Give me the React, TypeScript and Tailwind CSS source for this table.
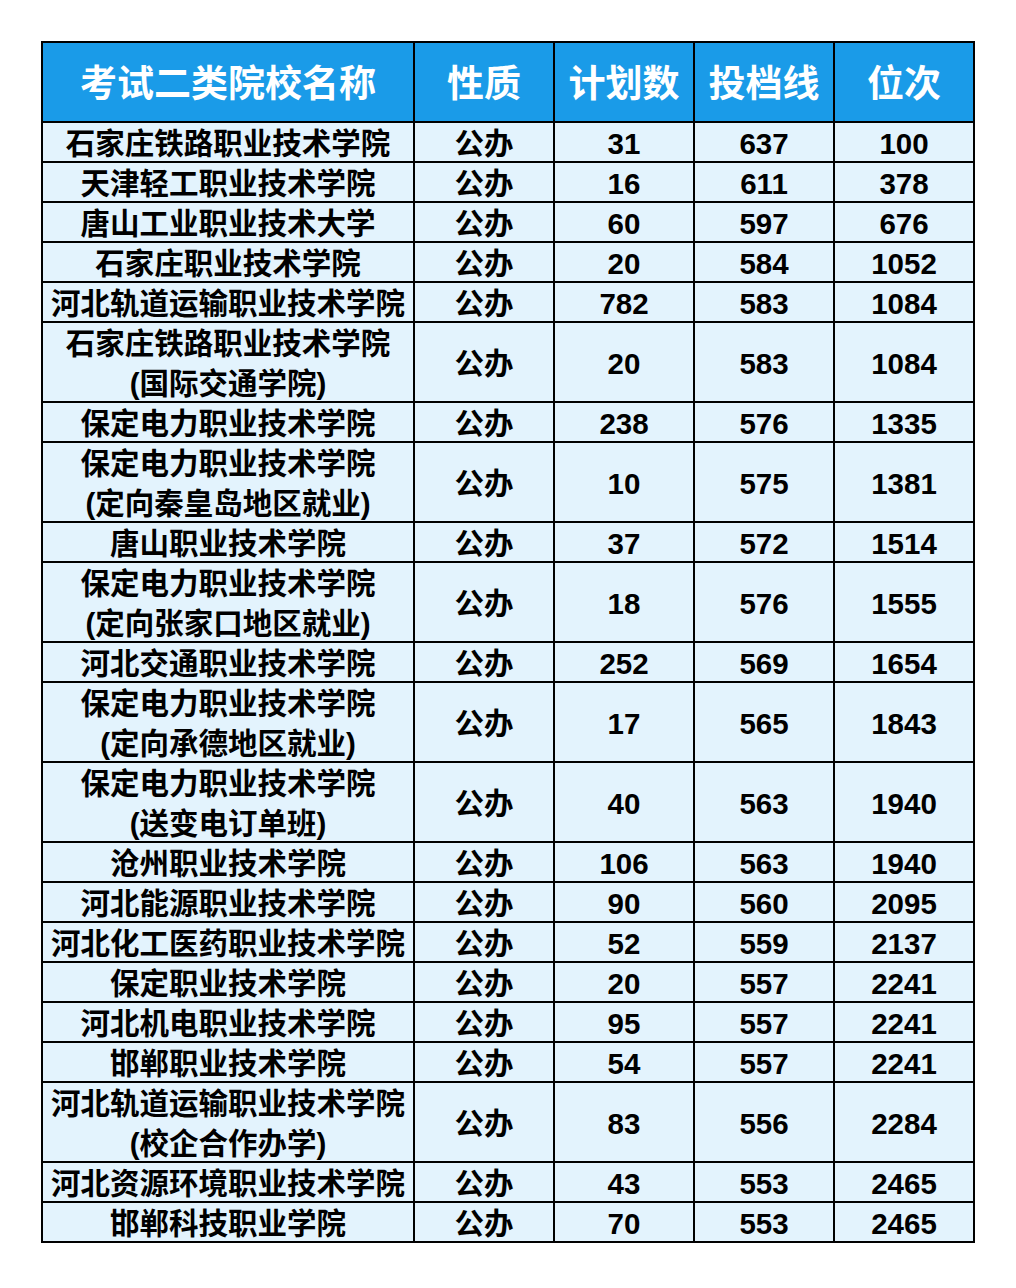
import React from "react";

type Row = { name: string[]; type: string; plan: string; line: string; rank: string };

const rows: Row[] = [
  { name: ["石家庄铁路职业技术学院"], type: "公办", plan: "31", line: "637", rank: "100" },
  { name: ["天津轻工职业技术学院"], type: "公办", plan: "16", line: "611", rank: "378" },
  { name: ["唐山工业职业技术大学"], type: "公办", plan: "60", line: "597", rank: "676" },
  { name: ["石家庄职业技术学院"], type: "公办", plan: "20", line: "584", rank: "1052" },
  { name: ["河北轨道运输职业技术学院"], type: "公办", plan: "782", line: "583", rank: "1084" },
  { name: ["石家庄铁路职业技术学院", "(国际交通学院)"], type: "公办", plan: "20", line: "583", rank: "1084" },
  { name: ["保定电力职业技术学院"], type: "公办", plan: "238", line: "576", rank: "1335" },
  { name: ["保定电力职业技术学院", "(定向秦皇岛地区就业)"], type: "公办", plan: "10", line: "575", rank: "1381" },
  { name: ["唐山职业技术学院"], type: "公办", plan: "37", line: "572", rank: "1514" },
  { name: ["保定电力职业技术学院", "(定向张家口地区就业)"], type: "公办", plan: "18", line: "576", rank: "1555" },
  { name: ["河北交通职业技术学院"], type: "公办", plan: "252", line: "569", rank: "1654" },
  { name: ["保定电力职业技术学院", "(定向承德地区就业)"], type: "公办", plan: "17", line: "565", rank: "1843" },
  { name: ["保定电力职业技术学院", "(送变电订单班)"], type: "公办", plan: "40", line: "563", rank: "1940" },
  { name: ["沧州职业技术学院"], type: "公办", plan: "106", line: "563", rank: "1940" },
  { name: ["河北能源职业技术学院"], type: "公办", plan: "90", line: "560", rank: "2095" },
  { name: ["河北化工医药职业技术学院"], type: "公办", plan: "52", line: "559", rank: "2137" },
  { name: ["保定职业技术学院"], type: "公办", plan: "20", line: "557", rank: "2241" },
  { name: ["河北机电职业技术学院"], type: "公办", plan: "95", line: "557", rank: "2241" },
  { name: ["邯郸职业技术学院"], type: "公办", plan: "54", line: "557", rank: "2241" },
  { name: ["河北轨道运输职业技术学院", "(校企合作办学)"], type: "公办", plan: "83", line: "556", rank: "2284" },
  { name: ["河北资源环境职业技术学院"], type: "公办", plan: "43", line: "553", rank: "2465" },
  { name: ["邯郸科技职业学院"], type: "公办", plan: "70", line: "553", rank: "2465" },
];

const font = { fontFamily: '"Liberation Sans", "Noto Sans CJK SC", sans-serif' };

export default function App() {
  return (
    <div className="w-[1016px] h-[1288px] bg-white pt-[41px] pl-[41px]" style={font}>
      <div className="grid grid-cols-[370px_138px_138px_138px_138px] gap-[2px] bg-black p-[2px] w-[934px]">
        {["考试二类院校名称", "性质", "计划数", "投档线", "位次"].map((h) => (
          <div
            key={h}
            className="h-[78px] pt-[4px] bg-[#1a9be8] text-white text-[37px] font-semibold flex items-center justify-center leading-none"
          >
            {h}
          </div>
        ))}
        {rows.map((r, i) => {
          const h = r.name.length > 1 ? "h-[78px]" : "h-[38px]";
          const cell = `${h} pt-[4px] bg-[#e3f3fd] text-black text-[29.5px] font-bold flex items-center justify-center`;
          return (
            <React.Fragment key={i}>
              <div className={`${cell} flex-col leading-[40px]`}>
                {r.name.map((n) => (
                  <span key={n} className="whitespace-nowrap">{n}</span>
                ))}
              </div>
              <div className={cell}>{r.type}</div>
              <div className={cell}>{r.plan}</div>
              <div className={cell}>{r.line}</div>
              <div className={cell}>{r.rank}</div>
            </React.Fragment>
          );
        })}
      </div>
    </div>
  );
}
